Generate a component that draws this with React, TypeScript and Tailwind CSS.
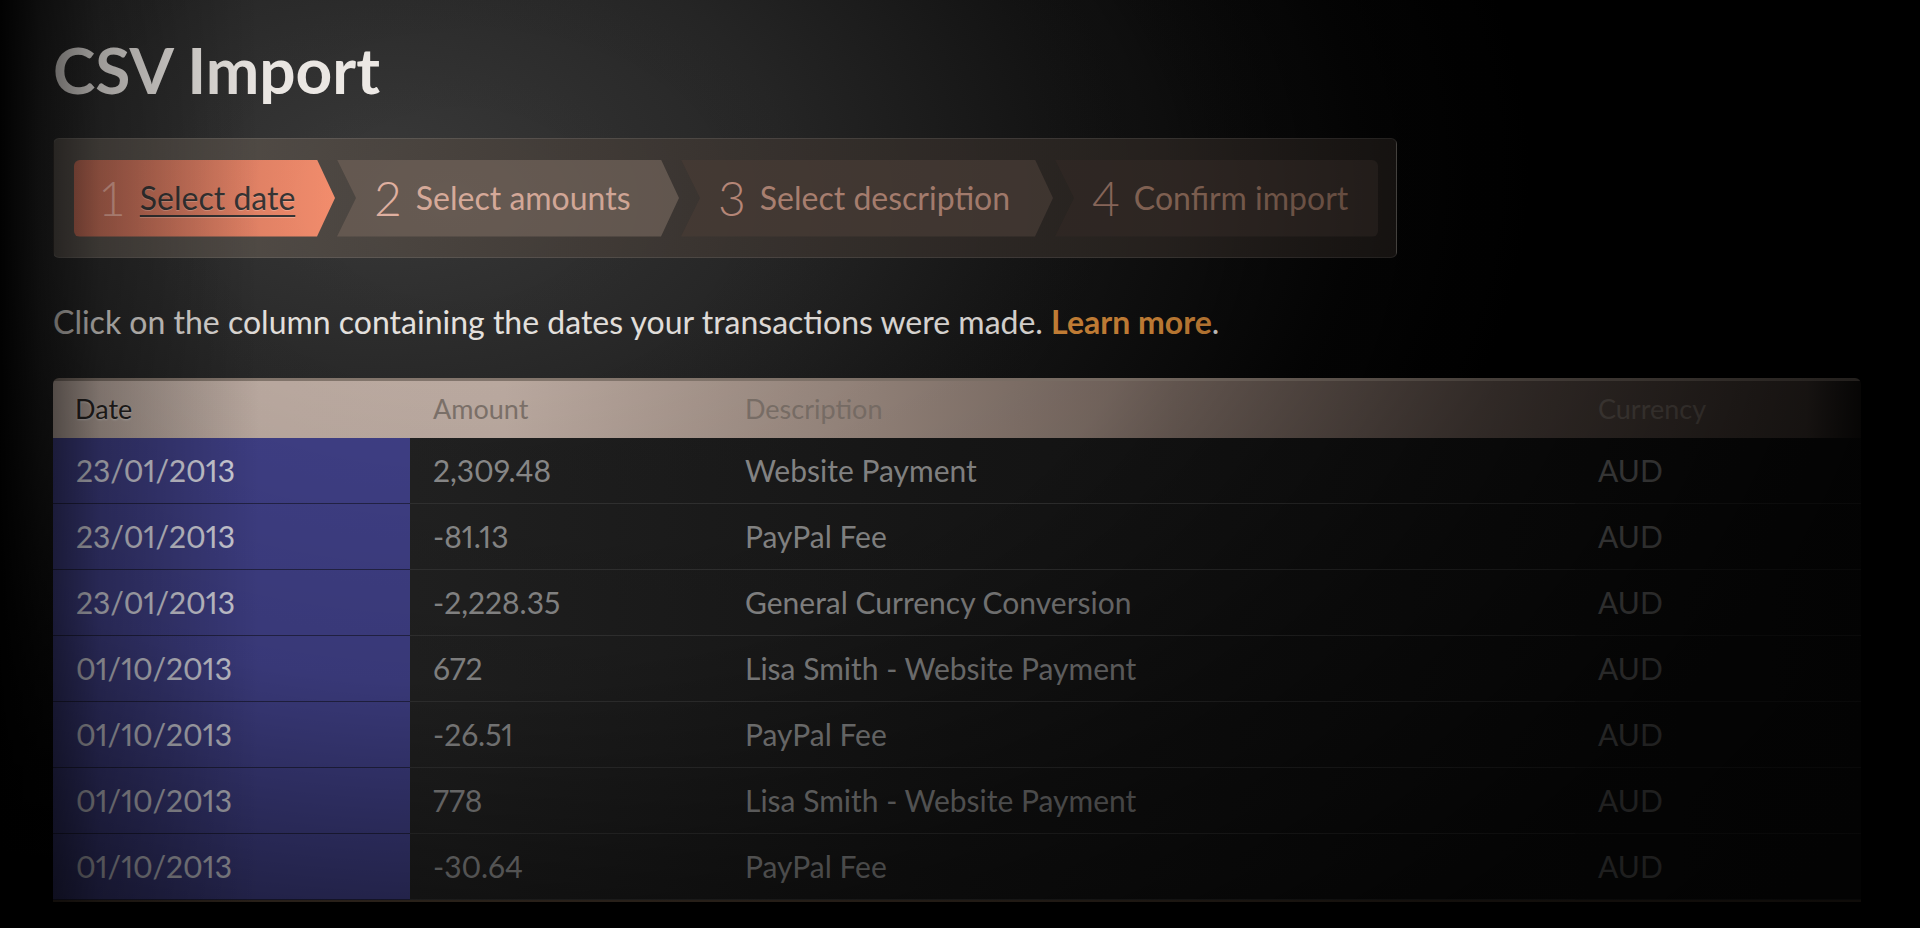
import React from 'react';

const steps = [
  { n: '1', label: 'Select date', w: 'w-[261px]', active: true, bg: '', num: 'text-[#f3b3a2]', txt: '' },
  { n: '2', label: 'Select amounts', w: 'w-[342px]', bg: 'bg-[#665a52]', num: 'text-[#e2b2a2]', txt: 'text-[#d6aa9a]' },
  { n: '3', label: 'Select description', w: 'w-[372px]', bg: 'bg-[#473c36]', num: 'text-[#c08e7e]', txt: 'text-[#b48878]' },
  { n: '4', label: 'Confirm import', w: 'w-[323px]', last: true, bg: 'bg-[#352c28]', num: 'text-[#9a7466]', txt: 'text-[#94705f]' },
];

const rows = [
  ['23/01/2013', '2,309.48', 'Website Payment', 'AUD'],
  ['23/01/2013', '-81.13', 'PayPal Fee', 'AUD'],
  ['23/01/2013', '-2,228.35', 'General Currency Conversion', 'AUD'],
  ['01/10/2013', '672', 'Lisa Smith - Website Payment', 'AUD'],
  ['01/10/2013', '-26.51', 'PayPal Fee', 'AUD'],
  ['01/10/2013', '778', 'Lisa Smith - Website Payment', 'AUD'],
  ['01/10/2013', '-30.64', 'PayPal Fee', 'AUD'],
];

function Stepper() {
  return (
    <div className="mt-[36px] flex h-[120px] w-[1344px] items-center rounded-md border border-white/10 bg-gradient-to-r from-[#5c5650] via-[#3c3632] to-[#221d1a] pl-[20px]">
      <div className="flex h-[77px] gap-[2px]">
        {steps.map((s) => {
          // first step has no notch, last step has no arrow
          const clip = s.active
            ? '[clip-path:polygon(0_0,calc(100%_-_18px)_0,100%_50%,calc(100%_-_18px)_100%,0_100%)] rounded-l-md'
            : s.last
              ? '[clip-path:polygon(0_0,100%_0,100%_100%,0_100%,19px_50%)] rounded-r-md'
              : '[clip-path:polygon(0_0,calc(100%_-_18px)_0,100%_50%,calc(100%_-_18px)_100%,0_100%,19px_50%)]';
          return (
            <div
              key={s.n}
              className={`${s.w} ${clip} flex h-full items-center ${
                s.active ? 'bg-gradient-to-r from-[#c9705a] to-[#f8906f] pl-[24px]' : `${s.bg} pl-[37px]`
              }`}
            >
              <span className={`text-[48px] font-light leading-none ${s.num}`}>{s.n}</span>
              <span
                className={`ml-[14px] text-[32px] leading-none ${
                  s.active
                    ? 'text-[#383636] underline decoration-2 underline-offset-[5px] [text-shadow:0_1px_0_rgba(255,200,180,0.5)]'
                    : s.txt
                }`}
              >
                {s.label}
              </span>
            </div>
          );
        })}
      </div>
    </div>
  );
}

function ImportTable() {
  const cell = 'flex h-[66px] items-center pl-[23px] text-[30px] proportional-nums border-b';
  return (
    <div className="mt-[37px] w-[1808px] overflow-hidden rounded-t-md border-b-2 border-[#4e3e30]">
      <div className="grid grid-cols-[357px_312px_853px_286px] border-t-[3px] border-[#8a7c72] bg-[linear-gradient(to_right,#c6b4aa_0%,#c4b2a8_25%,#a08e84_45%,#7a6a62_62%,#5e504a_82%,#4e423c_97%,#1a1614_100%)]">
        <div className="flex h-[57px] items-center pl-[22px] text-[27px] text-[#2a2624] [text-shadow:0_1px_2px_rgba(255,255,255,0.6)]">
          Date
        </div>
        {['Amount', 'Description', 'Currency'].map((h) => (
          <div key={h} className="flex h-[57px] items-center pl-[23px] text-[27px] text-[#83776f]">
            {h}
          </div>
        ))}
      </div>
      <div className="grid grid-cols-[357px_312px_853px_286px] bg-[linear-gradient(to_right,#232323_20%,#181818_50%,#0e0e0e_100%)]">
        {rows.map((r, i) => (
          <React.Fragment key={i}>
            <div className={`${cell} bg-[#42428c] text-[#e2e2ee] border-[#25254a] pl-[22px]`}>{r[0]}</div>
            <div className={`${cell} text-[#929292] border-[#343434]`}>{r[1]}</div>
            <div className={`${cell} text-[#929292] border-[#343434]`}>{r[2]}</div>
            <div className={`${cell} text-[#848484] border-[#2a2a2a]`}>{r[3]}</div>
          </React.Fragment>
        ))}
      </div>
    </div>
  );
}

export default function App() {
  return (
    <div className="relative h-[928px] w-full overflow-hidden bg-[radial-gradient(ellipse_1150px_720px_at_380px_170px,#3a3a3a_0%,#282828_35%,#121212_65%,#060606_85%,#000_100%)] pl-[53px] pt-[38px] font-['Lato',sans-serif]">
      <h1 className="text-[64px] font-bold leading-none text-[#f6f2ee]">CSV Import</h1>

      <Stepper />

      <p className="mt-[45px] text-[32px] leading-[38px] text-[#eeeae6]">
        Click on the column containing the dates your transactions were made.{' '}
        <a className="font-bold text-[#dc8e3c]">Learn more</a>.
      </p>

      <ImportTable />

      {/* spotlight vignette over the whole screen */}
      <div className="pointer-events-none absolute inset-0 bg-[radial-gradient(ellipse_1800px_1200px_at_450px_200px,rgba(0,0,0,0)_0%,rgba(0,0,0,0.15)_40%,rgba(0,0,0,0.5)_60%,rgba(0,0,0,0.75)_80%,rgba(0,0,0,0.82)_100%)]" />
      <div className="pointer-events-none absolute inset-0 bg-[linear-gradient(to_right,rgba(0,0,0,0.95)_0px,rgba(0,0,0,0.6)_40px,rgba(0,0,0,0.3)_100px,rgba(0,0,0,0)_260px)]" />
    </div>
  );
}
